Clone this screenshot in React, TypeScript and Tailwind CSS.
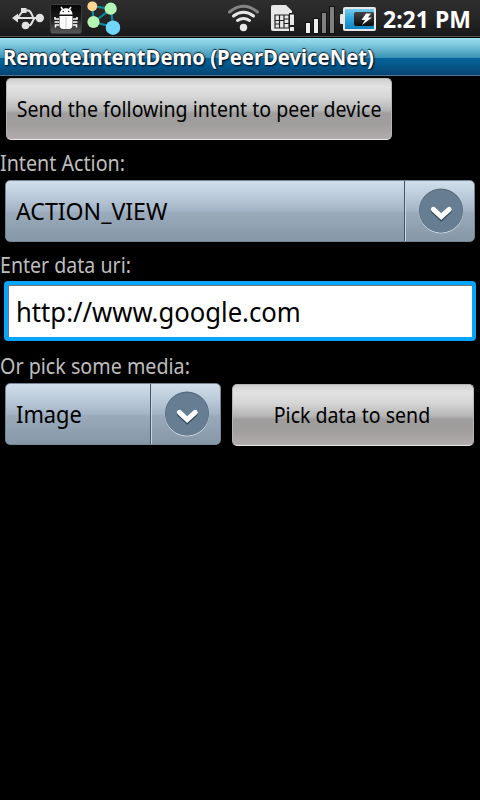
import React from "react";

function Label({ children, className = "origin-left" }: { children: React.ReactNode; className?: string }) {
  return (
    <span className={`inline-block whitespace-pre ${className}`}>{children}</span>
  );
}

function StatusBar() {
  return (
    <header className="flex h-[38px] w-full shrink-0 items-start border-b border-black bg-linear-to-b from-[#2e2e2e] via-[#262626] to-[#171717] shadow-[inset_0_-1px_#555]">
      <svg width="378" height="36" viewBox="0 0 378 36" className="shrink-0">
        <defs>
          <linearGradient id="tile" x1="0" y1="0" x2="0" y2="1">
            <stop offset="0" stopColor="#050505" />
            <stop offset=".5" stopColor="#1c1c1c" />
            <stop offset="1" stopColor="#5a5a5a" />
          </linearGradient>
          <linearGradient id="cell" x1="0" y1="0" x2="0" y2="1">
            <stop offset="0" stopColor="#7fd0f0" />
            <stop offset=".45" stopColor="#35a7dc" />
            <stop offset="1" stopColor="#087fc0" />
          </linearGradient>
          <linearGradient id="charge" x1="0" y1="0" x2="0" y2="1">
            <stop offset="0" stopColor="#444" />
            <stop offset="1" stopColor="#0c0c0c" />
          </linearGradient>
        </defs>
        {/* USB */}
        <g fill="#e2e2e2">
          <path d="M12 18 L18 13.500 V22.500 Z" />
          <circle cx="39.800" cy="18" r="4.200" />
          <rect x="21" y="8" width="5.500" height="5" />
          <circle cx="25.500" cy="25.500" r="3.800" />
          <path d="M17 18 H38 M18 17.500 L22 12 M26 10.500 H28 C31.500 10.500 31.500 15 33.500 18 M26 25.500 H28.500 C33 25.500 31.500 20 35 18" fill="none" stroke="#e2e2e2" strokeWidth="2" />
        </g>
        {/* debugging */}
        <rect x="50.500" y="4.500" width="31" height="29" rx="2" fill="url(#tile)" stroke="#3c3c3c" />
        <g fill="#fff">
          <path d="M59.500 14.500 C59.500 6 72.500 6 72.500 14.500 Z" />
          <path d="M59.500 16 H72.500 V25 Q72.500 29 68.500 29 H63.500 Q59.500 29 59.500 25 Z" />
          <path d="M61 7 L63 10 M71 7 L69 10 M59 19 H55 V17 M59 22 H54.500 M59 25 H55.500 V27.500 M73 19 H77 V17 M73 22 H77.500 M73 25 H76.500 V27.500" fill="none" stroke="#fff" strokeWidth="1.500" />
          <path d="M66 17 V29" stroke="#c4c4c4" strokeWidth="1" />
          <circle cx="63.300" cy="11.500" r=".8" fill="#333" />
          <circle cx="68.700" cy="11.500" r=".8" fill="#333" />
        </g>
        {/* peer network */}
        <path d="M92 6 L111 9 L94 22 L113 27 L111 9 M92 6 L94 22" fill="none" stroke="#0a8ba0" strokeWidth="2.200" />
        <circle cx="92.300" cy="6.300" r="4.900" fill="#ffd993" />
        <circle cx="110.700" cy="8.700" r="6.100" fill="#b4f7b4" />
        <circle cx="93.500" cy="22" r="6.100" fill="#b4f7b4" />
        <circle cx="113" cy="27.700" r="7.200" fill="#6fd6ff" />
        {/* wifi */}
        <g fill="none" strokeLinecap="round" strokeWidth="3">
          <path d="M229.500 12 Q243.500 .500 257.500 12" stroke="#858585" />
          <path d="M233.500 16 Q243.500 8.500 253.500 16" stroke="#e8e8e8" />
          <path d="M237.500 20.500 Q243.500 16.500 249.500 20.500" stroke="#e8e8e8" />
        </g>
        <circle cx="243.500" cy="27.500" r="3.700" fill="#e8e8e8" />
        {/* sim card */}
        <path d="M273 5 H286 L292 11 V31 H273 Q271 31 271 29 V7 Q271 5 273 5 Z" fill="#e8e8e8" />
        <path d="M275 15 H289 V28 H275 Z M279.500 15 V28 M284 15 V28 M275 20.500 H279.500 M284 19 H289 M275 24 H279.500 M284 23.500 H289 M279.500 20.500 H284" fill="none" stroke="#222" strokeWidth="1.200" />
        <rect x="289" y="13" width="6" height="19" fill="#202020" />
        <rect x="290" y="14.500" width="4" height="10.500" fill="#e8e8e8" />
        <rect x="290" y="27" width="4" height="4" fill="#e8e8e8" />
        {/* signal */}
        <g stroke="#111" strokeWidth="1">
          <rect x="305.500" y="22.500" width="5" height="11" fill="#eee" />
          <rect x="313.500" y="18.500" width="5" height="15" fill="#eee" />
          <rect x="321.500" y="12.500" width="5" height="21" fill="#808080" />
          <rect x="329.500" y="6.500" width="5" height="27" fill="#808080" />
        </g>
        {/* battery */}
        <rect x="340" y="14" width="4" height="10" rx="1" fill="#e8e8e8" />
        <rect x="344" y="8" width="31" height="22" rx="1" fill="url(#cell)" stroke="#e8e8e8" strokeWidth="2" />
        <rect x="354" y="12" width="20" height="14" rx="2" fill="url(#charge)" />
        <path d="M366 13.500 H371 L368 17.500 H372 L362 25 L365 20 H361.500 Z" fill="#fff" />
      </svg>
      <Label className="ml-[5px] mt-[3px] text-[23px] leading-8 font-bold text-white">2:21 PM</Label>
    </header>
  );
}

function Chevron() {
  return (
    <svg width="46" height="46" viewBox="0 0 46 46" className="ml-0.5">
      <circle cx="23" cy="23.500" r="22" fill="#d2dfe8" />
      <circle cx="23" cy="22.500" r="22" fill="#52677a" />
      <circle cx="23" cy="23" r="21.500" fill="#677d92" />
      <path d="M15.400 22.900 L23.200 30.300 L31.200 22.900" fill="none" stroke="#33475a" strokeWidth="5" strokeLinecap="round" />
      <path d="M15.400 21.300 L23.200 28.500 L31.200 21.300" fill="none" stroke="#fff" strokeWidth="5" strokeLinecap="round" />
    </svg>
  );
}

function Spinner({ label, className, textClass }: { label: string; className: string; textClass: string }) {
  return (
    <button className={`flex h-[62px] shrink-0 rounded-[5px] border border-[#778491] bg-[linear-gradient(to_bottom,#d0deeb_0%,#bccbda_25%,#a3b4c6_50%,#9aaaba_53%,#8598a8_100%)] text-left text-black ${className}`}>
      <span className="flex h-full flex-1 items-center pl-2.5">
        <Label className={`origin-left text-2xl ${textClass}`}>{label}</Label>
      </span>
      <span className="flex h-full w-[70px] items-center justify-center border-l border-[#465563] shadow-[inset_1px_0_#c9d7e3]">
        <Chevron />
      </span>
    </button>
  );
}

const grayButton =
  "flex h-[62px] shrink-0 items-center justify-center rounded-[5px] border border-[#b5b5b5] border-b-[#e8e8e8] bg-[linear-gradient(to_bottom,#cfcfcf_0%,#e2e2e2_12%,#d6d6d6_30%,#b5b5b5_52%,#9f9d9d_57%,#a09d9d_75%,#b2acac_100%)] pb-0.5 text-black";

export default function App() {
  return (
    <div className="flex h-[800px] w-[480px] flex-col overflow-hidden bg-black font-['Noto_Sans',sans-serif]">
      <StatusBar />
      <div className="flex h-[38px] shrink-0 items-center border-b border-[#4c7895] bg-[linear-gradient(to_bottom,#9be0f0_0%,#7cc6dd_20%,#3a93b5_53%,#04659a_55%,#074474_100%)] pt-0.5 pl-[3px]">
        <Label className="origin-left scale-x-[0.965] text-[21px] font-bold text-white [text-shadow:1px_1px_2px_#001,0_-1px_1px_#123]">RemoteIntentDemo (PeerDeviceNet)</Label>
      </div>
      <main className="flex flex-col items-start">
        <button className={`mt-0.5 ml-1.5 w-[386px] ${grayButton}`}>
          <Label className="origin-center scale-x-[0.889] text-[22px]">Send the following intent to peer device</Label>
        </button>
        <Label className="mt-2 h-8 origin-left scale-x-[0.895] text-[22px] leading-[28px] text-[#bebebe]">Intent Action:</Label>
        <Spinner label="ACTION_VIEW" className="ml-[5px] w-[470px]" textClass="scale-x-[0.962]" />
        <Label className="mt-2 h-[31px] origin-left scale-x-[0.89] text-[22px] leading-[28px] text-[#bebebe]">Enter data uri:</Label>
        <div className="ml-1 flex h-[60px] w-[472px] items-center rounded-[4px] border-4 border-[#03a5ff] bg-white pt-0.5 pl-2 text-black shadow-[inset_1px_1px_#777]">
          <Label className="origin-left scale-x-[0.95] text-[27px]">http://www.google.com</Label>
        </div>
        <Label className="mt-[11px] h-[31px] origin-left scale-x-[0.895] text-[22px] leading-[27px] text-[#bebebe]">Or pick some media:</Label>
        <div className="flex">
          <Spinner label="Image" className="ml-[5px] w-[216px]" textClass="scale-x-[0.91]" />
          <button className={`mt-px ml-[11px] w-[242px] pr-0.5 ${grayButton}`}>
            <Label className="origin-center scale-x-[0.889] text-[22px]">Pick data to send</Label>
          </button>
        </div>
      </main>
    </div>
  );
}
